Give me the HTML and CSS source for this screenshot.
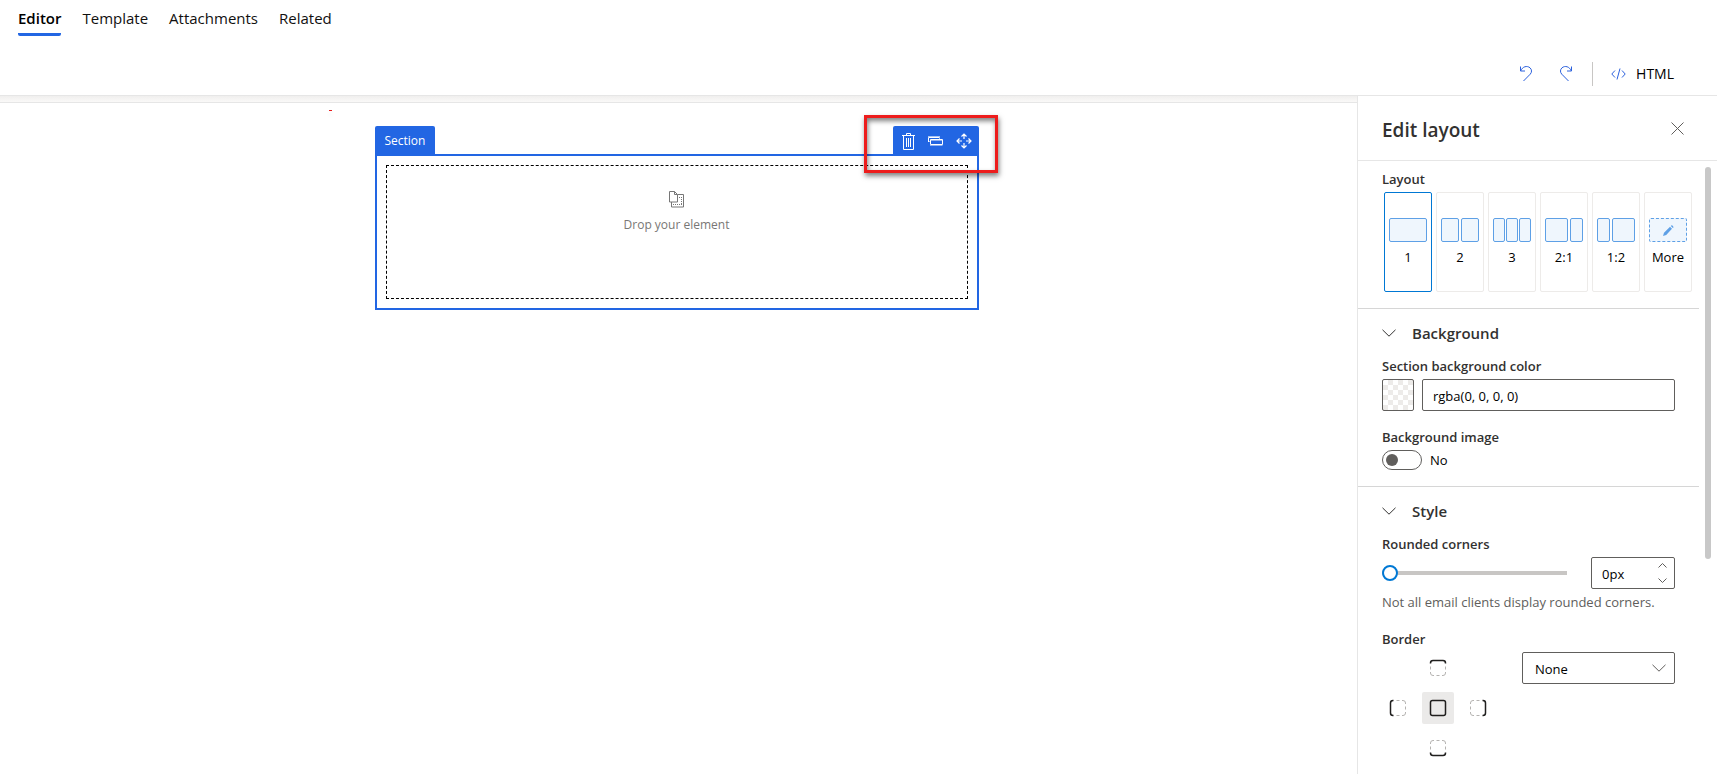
FILE: index.html
```html
<!DOCTYPE html>
<html lang="en">
<head>
<meta charset="utf-8">
<title>Email editor</title>
<link rel="stylesheet" href="styles.css">
</head>
<body>
<svg class="defs" width="0" height="0" aria-hidden="true">
  <symbol id="chevron" viewBox="0 0 14 8"><path d="M.5.8 7 7.2 13.500.8" fill="none" stroke="currentColor"/></symbol>
  <symbol id="chevron-small" viewBox="0 0 9 5"><path d="M.5.5l4 4 4-4" fill="none" stroke="currentColor"/></symbol>
  <symbol id="side" viewBox="0 0 18 18">
    <path d="M1.500 5V4Q1.500 1.500 4 1.500H5M7.500 1.500h3M13 1.500h1Q16.500 1.500 16.500 4v1M16.500 7.500v3M16.500 13v1Q16.500 16.500 14 16.500h-1M10.500 16.500h-3M5 16.500H4Q1.500 16.500 1.500 14v-1M1.500 10.500v-3" fill="none" stroke="#b5b3b1"/>
    <path d="M1 5V3.500Q1 1.500 3.500 1.500h11Q17 1.500 17 3.500V5" fill="none" stroke="#fff" stroke-width="2"/>
    <path d="M1.500 4.500V4Q1.500 1.500 4 1.500H14Q16.500 1.500 16.500 4v.5" fill="none" stroke="#201f1e" stroke-width="1.500"/>
  </symbol>
</svg>
<div class="app">
  <nav class="tabs">
    <a class="tab tab-active" href="#editor">Editor</a>
    <a class="tab" href="#template">Template</a>
    <a class="tab" href="#attachments">Attachments</a>
    <a class="tab" href="#related">Related</a>
  </nav>
  <div class="commands">
    <button class="command" aria-label="Undo"><svg width="14" height="17" viewBox="0 0 14 17"><path d="M1.500 1.500V6H6M1.800 5.800C3.500 1.500 8 .3 11 2.800c2 1.800 2 4.500.2 6.400L4.500 16" fill="none" stroke="currentColor"/></svg></button>
    <button class="command" aria-label="Redo"><svg width="14" height="17" viewBox="0 0 14 17"><path d="M12.500 1.500V6H8M12.200 5.800C10.500 1.500 6 .3 3 2.800c-2 1.800-2 4.500-.2 6.400L9.500 16" fill="none" stroke="currentColor"/></svg></button>
    <span class="separator"></span>
    <button class="command command-html"><svg width="15" height="12" viewBox="0 0 15 12"><path d="M4 2.500.8 6 4 9.500M11 2.500 14.200 6 11 9.500M9 .5l-3 11" fill="none" stroke="currentColor"/></svg><span>HTML</span></button>
  </div>
  <div class="workspace">
    <main class="canvas">
      <section class="section">
        <div class="section-bar">
          <span class="section-tag">Section</span>
          <div class="section-tools">
            <button class="tool" aria-label="Delete"><svg width="13" height="17" viewBox="0 0 13 17"><path d="M0 2.500h13M4.500 2.500v-2h4v2M1.500 3v13.500h10V3M4.500 5v9M6.500 5v9M8.500 5v9" fill="none" stroke="#fff"/></svg></button>
            <button class="tool" aria-label="Duplicate"><svg width="15" height="10" viewBox="0 0 15 10"><path d="M.5 6V1.500h11" fill="none" stroke="#fff"/><path d="M0 .5h12M11.500 1v2M1 5.500h2" fill="none" stroke="#a9c4f5"/><path d="M2.500 3.500h12v5h-12z" fill="#2266e3" stroke="#fff"/><path d="M2 9.500h12.500M3 4.500h11" fill="none" stroke="#8fb2f1"/></svg></button>
            <button class="tool" aria-label="Move"><svg width="16" height="16" viewBox="0 0 16 16"><path d="M8 6V1M5.500 3.500 8 1l2.500 2.500M8 10v5M5.500 12.500 8 15l2.500-2.500M6 8H1M3.500 5.500 1 8l2.500 2.500M10 8h5M12.500 5.500 15 8l-2.500 2.500" fill="none" stroke="#fff" stroke-width="1.200"/></svg></button>
            <span class="highlight"></span>
          </div>
        </div>
        <div class="section-frame">
          <div class="dropzone">
            <svg width="16" height="17" viewBox="0 0 16 17"><path d="M2.500 11v5h12V3.500H9" fill="none" stroke="#767676"/><path d="M10 6.500h3M4 13.500h9M12.500 6v8" fill="none" stroke="#767676" stroke-dasharray="1 1"/><path d="M.5.5h5l3 3v7.500h-8z" fill="#fff" stroke="#767676"/><path d="M5.500.5v3h3" fill="none" stroke="#767676"/></svg>
            <span>Drop your element</span>
          </div>
        </div>
      </section>
      <span class="mark"></span>
    </main>
    <aside class="panel">
      <header class="panel-header">
        <h2 class="panel-title">Edit layout</h2>
        <button class="close" aria-label="Close"><svg width="13" height="13" viewBox="0 0 13 13"><path d="M.5.5l12 12M12.500.5l-12 12" stroke="currentColor"/></svg></button>
      </header>
      <div class="panel-body">
        <div class="group group-layout">
          <h4 class="label">Layout</h4>
          <div class="layouts">
            <button class="layout layout-selected"><span class="cols"><i class="w1"></i></span>1</button>
            <button class="layout"><span class="cols"><i class="w1"></i><i class="w1"></i></span>2</button>
            <button class="layout"><span class="cols cols-tight"><i class="w1"></i><i class="w1"></i><i class="w1"></i></span>3</button>
            <button class="layout"><span class="cols"><i class="w2"></i><i class="w1"></i></span>2:1</button>
            <button class="layout"><span class="cols"><i class="w1"></i><i class="w2"></i></span>1:2</button>
            <button class="layout"><span class="cols"><i class="w1 custom"><svg width="11" height="11" viewBox="0 0 11 11"><path d="M0 11l1-3.200L7 1.800 9 3.800 3.200 10zM7.800 1 8.600.2q1.200-.2 2 2l-.8.8z" fill="#5ea0e6"/></svg></i></span>More</button>
          </div>
        </div>
        <div class="group group-background">
          <button class="group-title"><svg width="14" height="8"><use href="#chevron"/></svg>Background</button>
          <label class="label" for="color">Section background color</label>
          <div class="color-row">
            <button class="swatch" aria-label="Pick a color"></button>
            <input class="field color" id="color" type="text" value="rgba(0, 0, 0, 0)">
          </div>
          <label class="label" for="image">Background image</label>
          <div class="toggle-row">
            <input class="toggle" id="image" type="checkbox" role="switch">
            <span>No</span>
          </div>
        </div>
        <div class="group group-style">
          <button class="group-title"><svg width="14" height="8"><use href="#chevron"/></svg>Style</button>
          <label class="label" for="corners">Rounded corners</label>
          <div class="slider-row">
            <input class="slider" id="corners" type="range" min="0" max="50" value="0">
            <div class="field spinner">
              <input class="spinner-value" type="text" value="0px" aria-label="Corner radius">
              <div class="spinner-buttons">
                <button class="step step-up" aria-label="Increase"><svg width="9" height="5"><use href="#chevron-small"/></svg></button>
                <button class="step" aria-label="Decrease"><svg width="9" height="5"><use href="#chevron-small"/></svg></button>
              </div>
            </div>
          </div>
          <p class="note">Not all email clients display rounded corners.</p>
          <label class="label" for="border">Border</label>
          <div class="border-row">
            <div class="sides">
              <button class="side side-top" aria-label="Top"><svg width="18" height="18"><use href="#side"/></svg></button>
              <button class="side side-left" aria-label="Left"><svg width="18" height="18"><use href="#side"/></svg></button>
              <button class="side side-all" aria-label="All"><svg width="18" height="18" viewBox="0 0 18 18"><rect x="1.500" y="1.500" width="15" height="15" rx="2" fill="none" stroke="#201f1e" stroke-width="1.500"/></svg></button>
              <button class="side side-right" aria-label="Right"><svg width="18" height="18"><use href="#side"/></svg></button>
              <button class="side side-bottom" aria-label="Bottom"><svg width="18" height="18"><use href="#side"/></svg></button>
            </div>
            <div class="select-wrap">
              <select class="field select" id="border"><option>None</option><option>Solid</option><option>Dashed</option></select>
              <svg class="select-icon" width="14" height="8"><use href="#chevron"/></svg>
            </div>
          </div>
        </div>
      </div>
      <span class="scrollbar"></span>
    </aside>
  </div>
</div>
</body>
</html>
```

FILE: styles.css
```css
* { box-sizing: border-box; }
body {
  margin: 0;
  font: 14px/20px "Open Sans", "Noto Sans", sans-serif;
  color: #000;
  background: #fff;
}
button, input, select { font: inherit; color: inherit; }
button { padding: 0; border: 0; background: none; }
svg { display: block; flex: none; }
.defs { position: absolute; }
.app { display: flex; flex-direction: column; height: 100vh; overflow: hidden; }

.tabs { display: flex; gap: 21px; padding: 8px 18px 0; }
.tab { color: #11100f; text-decoration: none; border-bottom: 3px solid transparent; border-radius: 2px; padding-bottom: 5px; font-size: 15px; }
.tab-active { font-weight: 600; border-color: #2266e3; color: #000; }

.commands { display: flex; align-items: center; justify-content: flex-end; height: 59px; padding: 16px 43px 0 0; }
.command { display: flex; align-items: center; color: #2b60dd; margin-right: 26px; }
.separator { width: 1px; height: 24px; background: #c8c6c4; margin: 0 18px 0 -7px; }
.command-html { gap: 10px; margin: 0; }
.command-html span { color: #000; }

.workspace { display: flex; flex: 1; min-height: 0; border-top: 1px solid #e6e6e6; }
.canvas { flex: 1; position: relative; padding: 30px 4px 0 0; }
.canvas::before { content: ""; position: absolute; top: 0; left: 0; right: 0; height: 6px; background: linear-gradient(#f0efee, #faf9f8); border-bottom: 1px solid #e6e6e6; }
.mark { position: absolute; left: 329px; top: 14px; width: 3px; height: 1px; background: #e81c1c; box-shadow: 0 4px 4px #ddd; }

.section { width: 604px; margin: 0 auto; }
.section-bar { display: flex; justify-content: space-between; height: 28px; }
.section-tag { padding: 6px 10px 4px; background: #2266e3; color: #fff; font-size: 12px; line-height: 18px; border-radius: 2px 2px 0 0; }
.section-tools { position: relative; display: flex; gap: 13px; align-items: center; padding: 2px 7px 0 9px; background: #2266e3; border-radius: 2px 2px 0 0; }
.highlight { position: absolute; inset: -11px -19px -19px -29px; border: 3px solid #ed1c1c; box-shadow: 1px 3px 5px rgba(0,0,0,.5), inset 1px 3px 5px rgba(0,0,0,.5); pointer-events: none; }
.section-frame { border: 2px solid #2266e3; padding: 9px; }
.dropzone { display: flex; flex-direction: column; align-items: center; gap: 7px; height: 134px; padding-top: 25px; border: 1px dashed #000; color: #797775; font-size: 12px; }

.panel { position: relative; width: 360px; border-left: 1px solid #e6e6e6; background: #fff; }
.panel-header { display: flex; align-items: center; justify-content: space-between; height: 65px; padding: 4px 33px 0 24px; border-bottom: 1px solid #e6e6e6; }
.panel-title { margin: 0; font-size: 19px; line-height: 28px; font-weight: 600; color: #323130; }
.close { color: #605e5c; margin-top: -4px; }
.panel-body { margin-right: 18px; }
.group { padding: 0 24px; border-bottom: 1px solid #d6d6d6; }
.label { display: block; margin: 0; font-size: 13px; line-height: 20px; font-weight: 600; color: #323130; }
.group-layout { padding-top: 8px; padding-right: 7px; padding-bottom: 16px; }
.layouts { display: flex; gap: 4px; padding: 3px 0 0 2px; }
.layout { display: flex; flex-direction: column; align-items: center; flex: 1; min-width: 0; height: 100px; padding-top: 25px; border: 1px solid #edebe9; border-radius: 2px; font-size: 13px; }
.layout-selected { border-color: #0078d4; }
.cols { display: flex; gap: 2px; width: 38px; height: 24px; margin-bottom: 5px; }
.cols-tight { gap: 1px; }
.cols i { display: flex; align-items: center; justify-content: center; border: 1px solid #5ea0e6; border-radius: 2px; background: #eff6fd; }
.w1 { flex: 1; }
.w2 { flex: 2; }
.cols .custom { border-style: dashed; }

.group-background { padding-top: 12px; padding-bottom: 16px; }
.group-title { display: flex; align-items: center; gap: 16px; width: 100%; height: 24px; font-size: 15px; font-weight: 600; color: #323130; margin-bottom: 11px; }
.color-row { display: flex; gap: 8px; margin: 3px 0 16px; }
.field { height: 32px; border: 1px solid #605e5c; border-radius: 2px; background: #fff; font-size: 13px; }
.color { width: 253px; padding: 2px 10px 0; }
.swatch { width: 32px; height: 32px; border: 1px solid #605e5c; border-radius: 2px; background: repeating-conic-gradient(#edebe9 0 25%, #fff 0 50%) 0 0 / 10px 10px; }
.toggle-row { display: flex; align-items: center; gap: 8px; margin-top: 3px; font-size: 13px; }
.toggle { appearance: none; display: flex; align-items: center; width: 40px; height: 20px; margin: 0; padding: 0 3px; border: 1px solid #605e5c; border-radius: 10px; }
.toggle::before { content: ""; width: 12px; height: 12px; border-radius: 50%; background: #605e5c; }

.group-style { padding-top: 12px; padding-bottom: 10px; border-bottom: 0; }
.slider-row { display: flex; align-items: center; gap: 24px; margin-top: 3px; }
.slider { appearance: none; width: 185px; height: 16px; margin: 0; background: linear-gradient(#c8c6c4, #c8c6c4) center / 100% 4px no-repeat; border-radius: 2px; }
.slider::-webkit-slider-thumb { appearance: none; width: 16px; height: 16px; border: 2px solid #0078d4; border-radius: 50%; background: #fff; }
.spinner { display: flex; width: 84px; padding-left: 10px; }
.spinner-value { width: 48px; padding: 2px 0 0; border: 0; background: none; }
.spinner-buttons { display: flex; flex-direction: column; }
.step { display: flex; align-items: center; justify-content: center; width: 24px; height: 15px; color: #605e5c; }
.step-up svg { transform: rotate(180deg); }
.note { margin: 3px 0 17px; font-size: 13px; color: #605e5c; }
.border-row { display: flex; align-items: flex-start; gap: 28px; margin-top: 3px; }
.sides { display: grid; grid-template-columns: repeat(3, 32px); grid-template-areas: ". t ." "l a r" ". b ."; gap: 8px; }
.side { display: flex; align-items: center; justify-content: center; height: 32px; border-radius: 2px; }
.side-top { grid-area: t; }
.side-left { grid-area: l; }
.side-all { grid-area: a; background: #ebeae9; }
.side-right { grid-area: r; }
.side-bottom { grid-area: b; }
.side-left svg { transform: rotate(-90deg); }
.side-right svg { transform: rotate(90deg); }
.side-bottom svg { transform: rotate(180deg); }
.select-wrap { position: relative; width: 153px; }
.select { appearance: none; width: 100%; padding: 2px 12px 0; }
.select-icon { position: absolute; right: 9px; top: 12px; color: #605e5c; pointer-events: none; }
.scrollbar { position: absolute; top: 71px; right: 6px; width: 6px; height: 392px; border-radius: 3px; background: #c8c8c8; }
```
